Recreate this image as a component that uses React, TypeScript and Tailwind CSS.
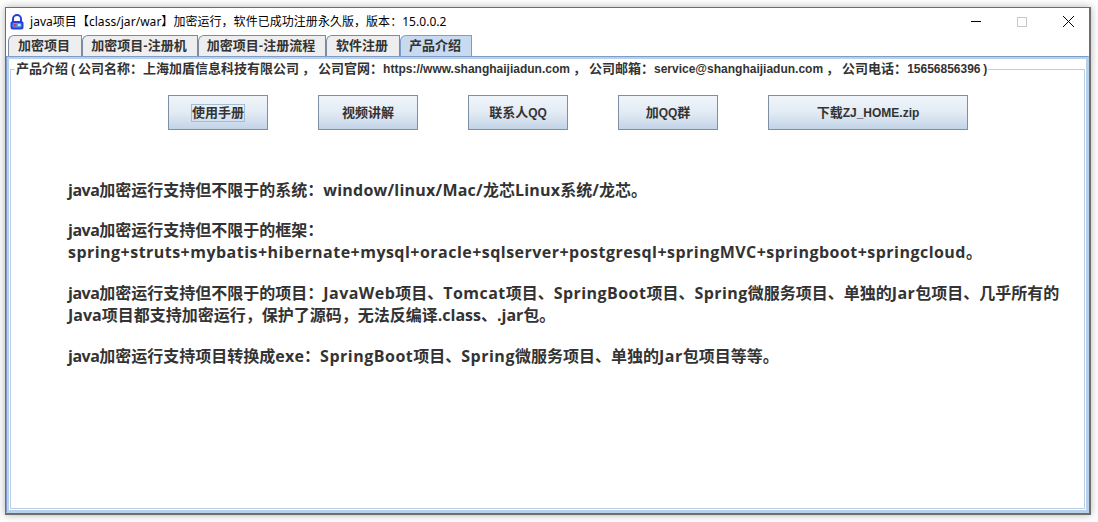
const tabs = [
  { label: "加密项目", width: "w-[74px]" },
  { label: "加密项目-注册机", width: "w-[116px]" },
  { label: "加密项目-注册流程", width: "w-[128px]" },
  { label: "软件注册", width: "w-[74px]" },
  { label: "产品介绍", width: "w-[72px]" },
];

const buttons = [
  { label: "使用手册", latin: "", width: "w-[100px]", focused: true },
  { label: "视频讲解", latin: "", width: "w-[100px]" },
  { label: "联系人", latin: "QQ", width: "w-[100px]" },
  { label: "加", latin: "QQ", rest: "群", width: "w-[100px]" },
  { label: "下载", latin: "ZJ_HOME.zip", width: "w-[200px]" },
];

function LockIcon() {
  return (
    <svg width="16" height="16" viewBox="0 0 16 16" className="shrink-0">
      <path d="M4 8V5a4 4 0 0 1 8 0v3" fill="none" stroke="#2a3fd6" strokeWidth="2" />
      <rect x="1.5" y="7" width="13" height="8.5" rx="2.5" fill="#2a3fd6" />
      <rect x="3.5" y="9" width="9" height="4.5" rx="1" fill="#39a6ee" />
      <rect x="4.5" y="10" width="3" height="2.5" fill="#d9367a" />
      <rect x="9" y="10" width="2.5" height="2" fill="#c9f0ff" />
    </svg>
  );
}

function WindowControls() {
  return (
    <div className="flex items-center h-full ml-auto -mr-[2px]">
      <div className="w-[46px] flex justify-center">
        <div className="w-[10px] h-px bg-black" />
      </div>
      <div className="w-[46px] flex justify-center">
        <div className="w-[10px] h-[10px] border border-[#c8c8c8]" />
      </div>
      <div className="w-[46px] flex justify-center">
        <svg width="11" height="11" viewBox="0 0 11 11">
          <path d="M0 0L11 11M11 0L0 11" stroke="#000" strokeWidth="1" />
        </svg>
      </div>
    </div>
  );
}

// latin runs are a size smaller than the CJK ones in the swing labels
function Sm({ children }: { children: React.ReactNode }) {
  return <span className="text-[12px]">{children}</span>;
}

export default function App() {
  return (
    <div className="w-[1098px] h-[522px] bg-white overflow-hidden pt-[7px] pl-[5px] font-['Open_Sans','Noto_Sans_CJK_SC',sans-serif]">
      <div className="w-[1086px] h-[508px] flex flex-col bg-white border border-[#6e6e6e] border-r-2 border-b-2 shadow-[0_0_8px_rgba(0,0,0,0.3)]">
        {/* title bar */}
        <div className="h-[27px] flex items-center pl-[3px] shrink-0">
          <LockIcon />
          <span className="ml-[5px] text-[12px] tracking-[0.04px] text-black whitespace-nowrap font-['Noto_Sans','Noto_Sans_CJK_SC',sans-serif]">
            java项目【class/jar/war】加密运行，软件已成功注册永久版，版本：15.0.0.2
          </span>
          <WindowControls />
        </div>

        {/* tabs */}
        <div className="flex h-[21px] pl-[2px] shrink-0">
          {tabs.map((t, i) => (
            <div
              key={i}
              className={`${t.width} h-[21px] pr-[2px] flex items-center justify-center border border-b-0 rounded-tl-[6px] text-[13px] font-bold text-[#333] whitespace-nowrap font-['Liberation_Sans','Noto_Sans_CJK_SC',sans-serif] ${
                i === 4 ? "bg-[#c8daef] border-[#7f9bc8]" : "bg-[#eeeeee] border-[#7a8ba8]"
              }`}
            >
              {t.label}
            </div>
          ))}
        </div>

        {/* tab panel */}
        <div className="flex-1 min-h-0 flex flex-col border border-[#b8d0ea] border-t-[#7f9bc8] border-l-[#7f9bc8]">
          <div className="flex-1 min-h-0 flex flex-col border-2 border-[#b8d0ea] pl-px pr-px pb-px pt-[2px]">
            <fieldset className="flex-1 min-h-0 border border-[#b8cfe6] pl-[57px] pr-[20px] m-0">
              <legend className="-ml-[53px] px-[1px] text-[13px] font-bold text-[#333] whitespace-nowrap leading-[16px] [word-spacing:-0.6px] font-['Liberation_Sans','Noto_Sans_CJK_SC',sans-serif]">
                产品介绍 <Sm>(</Sm> 公司名称：上海加盾信息科技有限公司 ， 公司官网：<Sm>https://www.shanghaijiadun.com</Sm> ， 公司邮箱：<Sm>service@shanghaijiadun.com</Sm> ， 公司电话：<Sm>15656856396 )</Sm>
              </legend>

              <div className="flex gap-[50px] ml-[100px] mt-[18px]">
                {buttons.map((b) => (
                  <div
                    key={b.label}
                    className={`${b.width} h-[35px] flex items-center justify-center border border-[#7e8ea3] bg-gradient-to-b from-[#f0f5fa] via-[#e2ebf4] to-[#c3d4e7] text-[13px] font-bold text-[#333] font-['Liberation_Sans','Noto_Sans_CJK_SC',sans-serif]`}
                  >
                    <span className={b.focused ? "border border-[#a3bdd4] leading-[16px]" : "leading-[16px]"}>
                      {b.label}
                      {b.latin && <Sm>{b.latin}</Sm>}
                      {b.rest}
                    </span>
                  </div>
                ))}
              </div>

              <div className="mt-[49px] text-[16px] font-bold leading-[22px] text-[#333] flex flex-col gap-[19px]">
                <p className="whitespace-nowrap -mb-px">
                  <span className="tracking-[-0.5px]">java</span>加密运行支持但不限于的系统：
                  <span className="tracking-[0.23px]">window/linux/Mac/</span>龙芯<span className="tracking-[0.23px]">Linux</span>系统/龙芯。
                </p>
                <p className="whitespace-nowrap">
                  <span className="tracking-[-0.5px]">java</span>加密运行支持但不限于的框架：
                  <br />
                  <span className="tracking-[0.47px]">spring+struts+mybatis+hibernate+mysql+oracle+sqlserver+postgresql+springMVC+springboot+springcloud</span>。
                </p>
                <p className="whitespace-nowrap">
                  <span className="tracking-[-0.5px]">java</span>加密运行支持但不限于的项目：
                  <span className="tracking-[0.45px]">JavaWeb</span>项目、<span className="tracking-[0.45px]">Tomcat</span>项目、<span className="tracking-[0.45px]">SpringBoot</span>项目、<span className="tracking-[0.45px]">Spring</span>微服务项目、单独的<span className="tracking-[0.45px]">Jar</span>包项目、几乎所有的
                  <br />
                  Java项目都支持加密运行，保护了源码，无法反编译.class、.jar包。
                </p>
                <p className="whitespace-nowrap">
                  <span className="tracking-[-0.5px]">java</span>加密运行支持项目转换成<span className="tracking-[0.2px]">exe</span>：
                  <span className="tracking-[0.5px]">SpringBoot</span>项目、<span className="tracking-[0.5px]">Spring</span>微服务项目、单独的<span className="tracking-[0.5px]">Jar</span>包项目等等。
                </p>
              </div>
            </fieldset>
          </div>
        </div>
      </div>
    </div>
  );
}
